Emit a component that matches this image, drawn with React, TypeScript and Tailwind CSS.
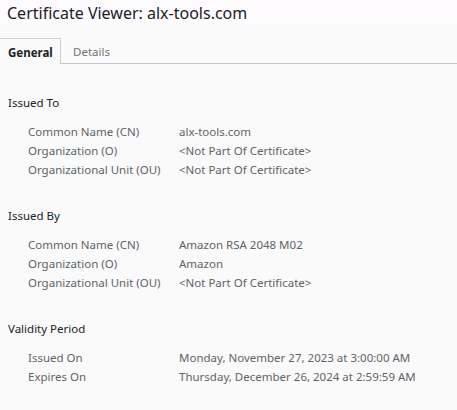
import React from 'react';

type Row = { label: string; value: string };

const sections: { title: string; rows: Row[] }[] = [
  {
    title: 'Issued To',
    rows: [
      { label: 'Common Name (CN)', value: 'alx-tools.com' },
      { label: 'Organization (O)', value: '<Not Part Of Certificate>' },
      { label: 'Organizational Unit (OU)', value: '<Not Part Of Certificate>' },
    ],
  },
  {
    title: 'Issued By',
    rows: [
      { label: 'Common Name (CN)', value: 'Amazon RSA 2048 M02' },
      { label: 'Organization (O)', value: 'Amazon' },
      { label: 'Organizational Unit (OU)', value: '<Not Part Of Certificate>' },
    ],
  },
  {
    title: 'Validity Period',
    rows: [
      { label: 'Issued On', value: 'Monday, November 27, 2023 at 3:00:00 AM' },
      { label: 'Expires On', value: 'Thursday, December 26, 2024 at 2:59:59 AM' },
    ],
  },
];

export default function App() {
  return (
    <div
      className="w-[457px] h-[410px] overflow-hidden bg-[#fafafa] text-[11.5px] leading-[19px]"
      style={{ fontFamily: '"Noto Sans", "Open Sans", sans-serif' }}
    >
      <div className="h-[24px] bg-[#fefbff] pl-[7px] text-[16px] leading-[26px] text-[#202124]">
        Certificate Viewer: alx-tools.com
      </div>

      <div className="mt-[14px] flex h-[26px]">
        <div className="w-[61px] border-t border-r border-[#d0d0d0] pl-[8px] pt-[4px] font-bold text-[#202124]">
          General
        </div>
        <div className="flex-1 border-b border-[#c4c4c4] pl-[12px] pt-[4px] text-[#70757a]">
          Details
        </div>
      </div>

      <div className="pt-[29px]">
        {sections.map((s) => (
          <div key={s.title} className="mb-[27px]">
            <div className="pl-[8px] text-[#202124] mb-[10px]">{s.title}</div>
            {s.rows.map((r) => (
              <div key={r.label} className="flex text-[#5f6368]">
                <div className="w-[179px] pl-[28px] shrink-0">{r.label}</div>
                <div className="whitespace-nowrap">{r.value}</div>
              </div>
            ))}
          </div>
        ))}
      </div>
    </div>
  );
}
